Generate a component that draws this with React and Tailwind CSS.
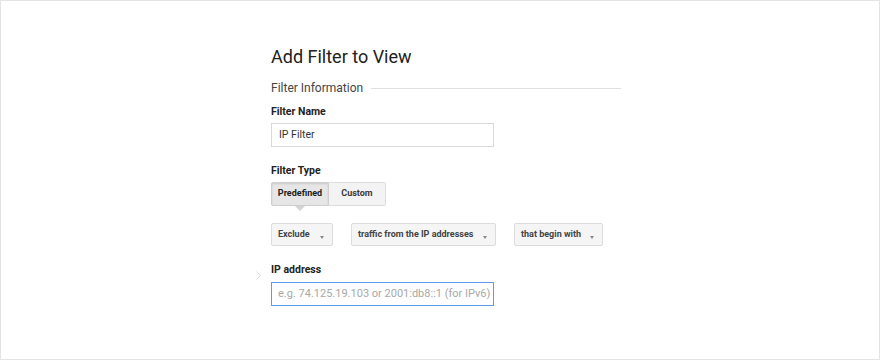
export default function App() {
  const font = { fontFamily: "Roboto, 'Liberation Sans', sans-serif" };

  const Dropdown = ({ label, width }) => (
    <div
      className={`flex items-center justify-between h-[23px] pl-[6px] pr-[8px] border border-[#dcdcdc] rounded-[2px] bg-[#f5f5f5] text-[9px] font-bold text-[#444] ${width}`}
    >
      <span>{label}</span>
      <span className="mt-[5px] w-0 h-0 border-l-[2.5px] border-r-[2.5px] border-t-[3px] border-l-transparent border-r-transparent border-t-[#888]"></span>
    </div>
  );

  return (
    <div
      className="w-[880px] h-[360px] border border-[#e3e3e3] bg-white pl-[270px] pt-[44px] text-[#222]"
      style={font}
    >
      <h1 className="text-[18px] leading-[24px] text-[#212121]">Add Filter to View</h1>

      <div className="flex items-center w-[350px] mt-[11px]">
        <span className="text-[12px] leading-[16px] text-[#444]">Filter Information</span>
        <div className="flex-1 h-px bg-[#e0e0e0] ml-[8px]"></div>
      </div>

      <div className="mt-[9px] text-[10.5px] leading-[14px] font-bold text-[#222]">Filter Name</div>
      <div className="mt-[4px] w-[223px] h-[24px] border border-[#d9d9d9] flex items-center pl-[7px] text-[10.5px] text-[#333]">
        IP Filter
      </div>

      <div className="mt-[17px] text-[10.5px] leading-[14px] font-bold text-[#222]">Filter Type</div>
      <div className="mt-[4px] flex text-[9px] font-bold text-[#3a3a3a]">
        <div className="relative w-[58px] h-[24px] flex items-center justify-center border border-[#cfcfcf] rounded-l-[2px] bg-[#e6e6e6] shadow-[inset_0_1px_2px_rgba(0,0,0,0.12)] text-[#222]">
          Predefined
          <span className="absolute left-[23px] top-[23px] w-0 h-0 border-l-[5px] border-r-[5px] border-t-[5px] border-l-transparent border-r-transparent border-t-[#d3d3d3]"></span>
        </div>
        <div className="w-[57px] h-[24px] flex items-center justify-center border border-l-0 border-[#dcdcdc] rounded-r-[2px] bg-[#f3f3f3]">
          Custom
        </div>
      </div>

      <div className="mt-[17px] flex gap-[18px]">
        <Dropdown label="Exclude" width="w-[62px]" />
        <Dropdown label="traffic from the IP addresses" width="w-[145px]" />
        <Dropdown label="that begin with" width="w-[89px]" />
      </div>

      <div className="relative mt-[17px]">
        <svg
          className="absolute left-[-15px] top-[8px]"
          width="5"
          height="9"
          viewBox="0 0 5 9"
        >
          <polyline points="0.5,0.5 4.5,4.5 0.5,8.5" fill="none" stroke="#d8d8d8" strokeWidth="1" />
        </svg>
        <div className="text-[10.5px] leading-[14px] font-bold text-[#222]">IP address</div>
        <div className="mt-[5px] w-[223px] h-[24px] border border-[#5b9bf0] flex items-center pl-[6px] text-[11px] text-[#a8a8a8]">
          e.g. 74.125.19.103 or 2001:db8::1 (for IPv6)
        </div>
      </div>
    </div>
  );
}
